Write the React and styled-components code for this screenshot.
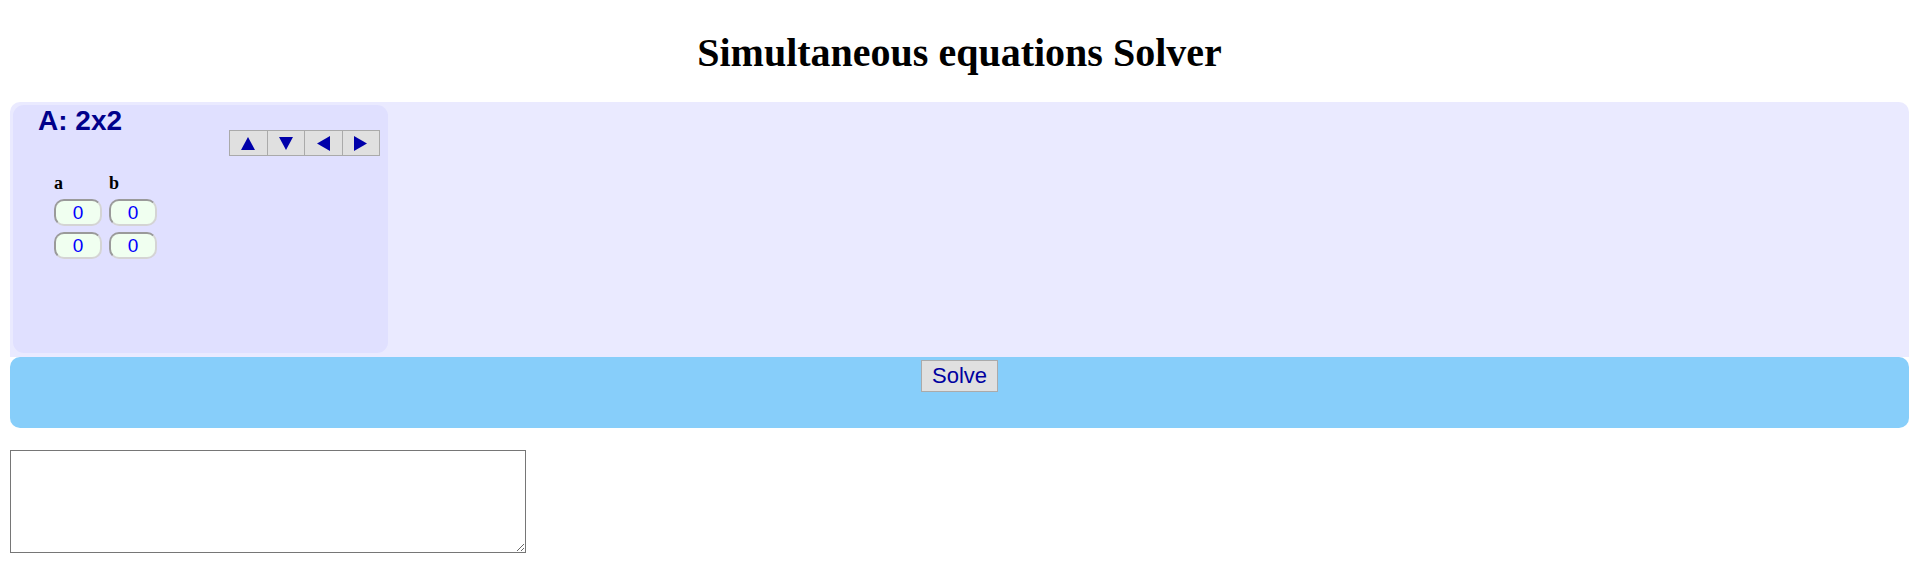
import React from 'react';
import styled, { createGlobalStyle } from 'styled-components';

const GlobalStyle = createGlobalStyle`
  body {
    margin: 0;
    background: white;
    font-family: "Liberation Serif", "Times New Roman", serif;
  }
`

const Page = styled('div')`
  padding: 0 11px 16px 10px;
`

const Title = styled('h1')`
  margin: 29px 0 26px;
  text-align: center;
  font-size: 40px;
  font-weight: bold;
  color: black;
`

const Workspace = styled('div')`
  background: #eaeaff;
  border-radius: 10px 10px 0 0;
  padding: 3px 0 4px 3px;
  display: flex;
`

const MatrixPanel = styled('div')`
  width: 375px;
  height: 248px;
  box-sizing: border-box;
  background: #e0e0ff;
  border-radius: 11px;
  padding: 0 8px 0 25px;
`

const MatrixHeader = styled('div')`
  display: flex;
  justify-content: space-between;
  align-items: flex-start;
`

const MatrixName = styled('div')`
  font-family: "Liberation Sans", Arial, sans-serif;
  font-size: 28px;
  line-height: 31px;
  font-weight: bold;
  color: #00008b;
`

const ArrowGroup = styled('div')`
  display: flex;
  margin-top: 25px;
`

const ArrowButton = styled('button')`
  width: 38.5px;
  height: 26px;
  box-sizing: border-box;
  padding: 0;
  background: #e0e0e0;
  border: 1px solid #aaaaaa;
  display: flex;
  align-items: center;
  justify-content: center;
  cursor: pointer;
  & + & {
    margin-left: -1px;
  }
`

const Grid = styled('div')`
  display: grid;
  grid-template-columns: repeat(${p => p.cols}, 48px);
  column-gap: 7px;
  row-gap: 6px;
  margin: 17px 0 0 16px;
`

const ColLabel = styled('div')`
  font-family: "Liberation Serif", "Times New Roman", serif;
  font-size: 18px;
  line-height: 20px;
  font-weight: bold;
  color: black;
`

const Cell = styled('input')`
  width: 48px;
  height: 27px;
  box-sizing: border-box;
  border: 2px solid;
  border-color: #9a9a9a #d4d4d4 #d4d4d4 #9a9a9a;
  border-radius: 10px;
  background: #f0fff0;
  color: #0000ff;
  font-family: "Liberation Sans", Arial, sans-serif;
  font-size: 19px;
  text-align: center;
  padding: 0;
  outline: none;
`

const SolveBar = styled('div')`
  background: #87cefa;
  border-radius: 10px;
  height: 71px;
  box-sizing: border-box;
  padding-top: 3px;
  text-align: center;
`

const SolveButton = styled('button')`
  height: 32px;
  padding: 0 10px;
  background: #e0e0e0;
  border: 1px solid #aaaaaa;
  color: #0000a0;
  font-family: "Liberation Sans", Arial, sans-serif;
  font-size: 22px;
  line-height: 28px;
  cursor: pointer;
`

const Output = styled('textarea')`
  display: block;
  margin-top: 22px;
  width: 516px;
  height: 103px;
  box-sizing: border-box;
  border: 1px solid #767676;
  border-radius: 0;
  padding: 2px;
  font-family: "Liberation Mono", monospace;
  font-size: 13px;
`

const Triangle = ({ dir }) => {
  const shapes = {
    up: { w: 14, h: 13, pts: '7,0 14,13 0,13' },
    down: { w: 14, h: 13, pts: '0,0 14,0 7,13' },
    left: { w: 13, h: 15, pts: '13,0 13,15 0,7.5' },
    right: { w: 13, h: 15, pts: '0,0 13,7.5 0,15' },
  }
  const s = shapes[dir]
  return (
    <svg width={s.w} height={s.h} viewBox={`0 0 ${s.w} ${s.h}`}>
      <polygon points={s.pts} fill="#0000aa" />
    </svg>
  )
}

const columns = ['a', 'b']
const rows = [[0, 0], [0, 0]]

export default function App() {
  return (
    <>
      <GlobalStyle />
      <Page>
        <Title>Simultaneous equations Solver</Title>
        <Workspace>
          <MatrixPanel>
            <MatrixHeader>
              <MatrixName>A: 2x2</MatrixName>
              <ArrowGroup>
                {['up', 'down', 'left', 'right'].map(d => (
                  <ArrowButton key={d}><Triangle dir={d} /></ArrowButton>
                ))}
              </ArrowGroup>
            </MatrixHeader>
            <Grid cols={columns.length}>
              {columns.map(c => <ColLabel key={c}>{c}</ColLabel>)}
              {rows.map((r, i) =>
                r.map((v, j) => <Cell key={`${i}-${j}`} defaultValue={v} />)
              )}
            </Grid>
          </MatrixPanel>
        </Workspace>
        <SolveBar>
          <SolveButton>Solve</SolveButton>
        </SolveBar>
        <Output />
      </Page>
    </>
  )
}
